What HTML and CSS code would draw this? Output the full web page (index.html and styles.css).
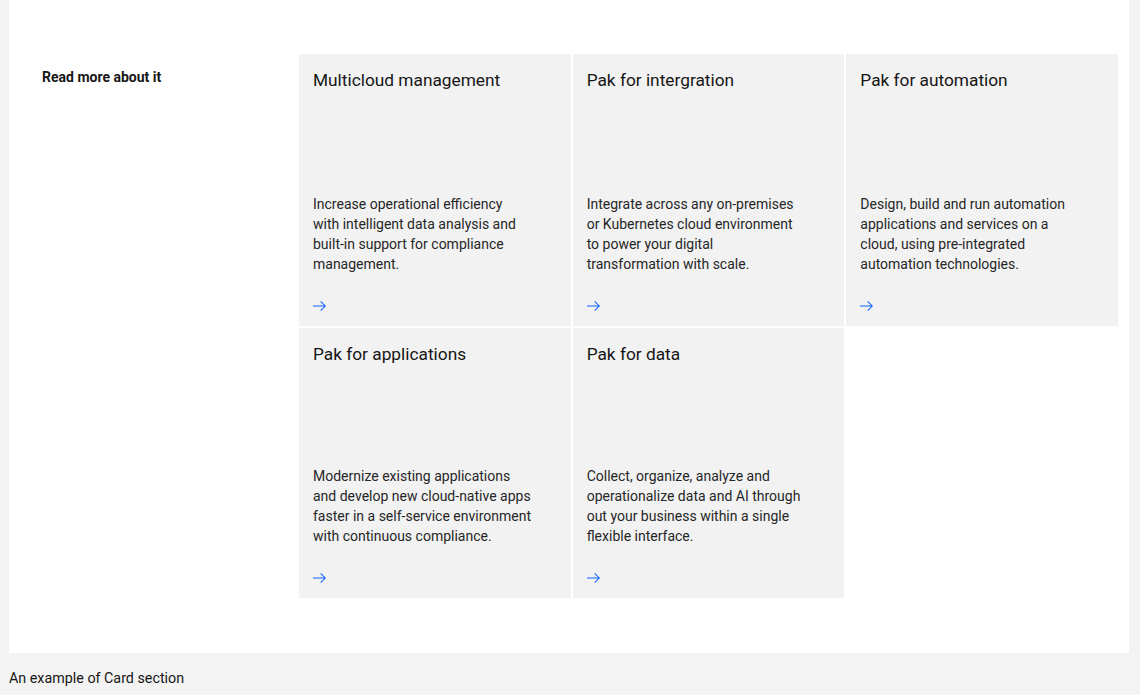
FILE: index.html
```html
<!DOCTYPE html>
<html lang="en">
<head>
<meta charset="utf-8">
<title>Card section</title>
<link rel="stylesheet" href="styles.css">
</head>
<body>
<div class="panel">
  <div class="label-col">
    <h3 class="label">Read more about it</h3>
  </div>
  <div class="grid">
    <a class="card" href="#">
      <h4 class="card-title">Multicloud management</h4>
      <p class="card-desc">Increase operational efficiency with intelligent data analysis and built-in support for compliance management.</p>
      <svg class="arrow" width="16" height="16" viewBox="0 0 16 16"><path d="M9 3L8.3 3.7 12.1 7.5 1 7.5 1 8.5 12.1 8.5 8.3 12.3 9 13 14 8z"/></svg>
    </a>
    <a class="card" href="#">
      <h4 class="card-title">Pak for intergration</h4>
      <p class="card-desc">Integrate across any on-premises or Kubernetes cloud environment to power your digital transformation with scale.</p>
      <svg class="arrow" width="16" height="16" viewBox="0 0 16 16"><path d="M9 3L8.3 3.7 12.1 7.5 1 7.5 1 8.5 12.1 8.5 8.3 12.3 9 13 14 8z"/></svg>
    </a>
    <a class="card" href="#">
      <h4 class="card-title">Pak for automation</h4>
      <p class="card-desc">Design, build and run automation applications and services on a cloud, using pre-integrated automation technologies.</p>
      <svg class="arrow" width="16" height="16" viewBox="0 0 16 16"><path d="M9 3L8.3 3.7 12.1 7.5 1 7.5 1 8.5 12.1 8.5 8.3 12.3 9 13 14 8z"/></svg>
    </a>
    <a class="card" href="#">
      <h4 class="card-title">Pak for applications</h4>
      <p class="card-desc">Modernize existing applications and develop new cloud-native apps faster in a self-service environment with continuous compliance.</p>
      <svg class="arrow" width="16" height="16" viewBox="0 0 16 16"><path d="M9 3L8.3 3.7 12.1 7.5 1 7.5 1 8.5 12.1 8.5 8.3 12.3 9 13 14 8z"/></svg>
    </a>
    <a class="card" href="#">
      <h4 class="card-title">Pak for data</h4>
      <p class="card-desc">Collect, organize, analyze and operationalize data and AI through out your business within a single flexible interface.</p>
      <svg class="arrow" width="16" height="16" viewBox="0 0 16 16"><path d="M9 3L8.3 3.7 12.1 7.5 1 7.5 1 8.5 12.1 8.5 8.3 12.3 9 13 14 8z"/></svg>
    </a>
  </div>
</div>
<p class="caption">An example of Card section</p>
</body>
</html>
```
FILE: styles.css
```css
* { box-sizing: border-box; }
html, body {
  margin: 0;
  padding: 0;
  background: #f3f3f3;
  font-family: Roboto, "Noto Sans", sans-serif;
  color: #161616;
}
.panel {
  margin-left: 9px;
  width: 1120px;
  background: #ffffff;
  padding: 54px 11px 55px 33px;
  display: flex;
}
.label-col {
  width: 257px;
  flex: none;
}
.label {
  margin: 0;
  padding-top: 13px;
  font-size: 14px;
  line-height: 20px;
  font-weight: 700;
  color: #161616;
}
.grid {
  width: 819px;
  display: grid;
  grid-template-columns: repeat(3, 1fr);
  grid-template-rows: 272px 270px;
  gap: 2px;
}
.card {
  background: #f2f2f2;
  padding: 13px 14px 12px 14px;
  display: flex;
  flex-direction: column;
  text-decoration: none;
  color: inherit;
}
.card-title {
  margin: 0;
  font-size: 17.3px;
  line-height: 26px;
  font-weight: 400;
  color: #161616;
}
.card-desc {
  margin: auto 0 0 0;
  width: 218.6px;
  font-size: 14px;
  line-height: 20px;
  color: #262626;
}
.arrow {
  margin-top: 24px;
  margin-left: -1px;
  fill: #0f62fe;
  flex: none;
}
.caption {
  margin: 15px 0 0 9px;
  font-size: 14.3px;
  line-height: 20px;
  color: #161616;
}
```
